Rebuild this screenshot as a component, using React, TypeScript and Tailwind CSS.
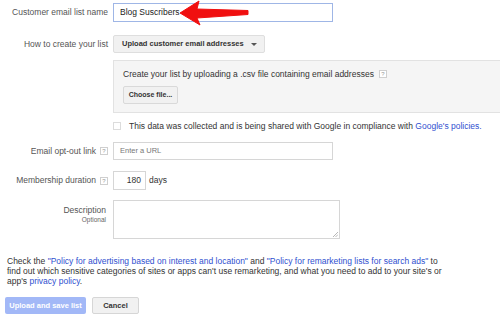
import React from 'react';

const font = { fontFamily: '"Liberation Sans", Arial, sans-serif' };

const Help = () => (
  <span className="inline-flex items-center justify-center w-[8px] h-[8px] border border-[#cfcfcf] text-[6px] leading-none text-[#999] bg-white">
    ?
  </span>
);

const Arrow = () => (
  <svg className="absolute left-[178px] top-0" width="74" height="26" viewBox="178 0 74 26">
    <polygon
      points="180,13 199,1 197,9 248,10.5 248,14.5 197,18 200,25"
      fill="#f01010"
      stroke="#f01010"
      strokeWidth="1"
      strokeLinejoin="round"
    />
  </svg>
);

export default function App() {
  return (
    <div
      className="relative w-[500px] h-[318px] overflow-hidden bg-white text-[8.5px] text-[#444] flex flex-col"
      style={font}
    >
      {/* list name */}
      <div className="flex items-center mt-[3px]">
        <div className="w-[108px] text-right text-[#555]">Customer email list name</div>
        <div className="ml-[5px] w-[220px] h-[19px] border border-[#9fb6e6] flex items-center px-[6px] text-[#222]">
          Blog Suscribers
        </div>
      </div>
      <Arrow />

      {/* how to create */}
      <div className="flex items-start mt-[13px]">
        <div className="w-[108px] text-right text-[#555] pt-[3px]">How to create your list</div>
        <div className="ml-[5px] w-[152px] h-[18px] bg-[#f1f1f1] border border-[#dedede] rounded-[2px] flex items-center justify-between pl-[8px] pr-[7px] text-[7.5px] font-bold text-[#333]">
          <span>Upload customer email addresses</span>
          <span className="w-0 h-0 border-l-[3px] border-r-[3px] border-t-[3px] border-l-transparent border-r-transparent border-t-[#555]" />
        </div>
      </div>

      {/* upload box */}
      <div className="ml-[113px] mt-[7px] w-[400px] h-[53px] bg-[#f5f5f5] border border-[#e2e2e2] pt-[8px] px-[9px] text-[#333]">
        <div className="flex items-center gap-[5px] h-[10px]">
          <span>Create your list by uploading a .csv file containing email addresses</span>
          <Help />
        </div>
        <div className="mt-[7px] w-[55px] h-[18px] bg-[#f1f1f1] border border-[#d9d9d9] rounded-[2px] flex items-center justify-center text-[7px] font-bold text-[#333]">
          Choose file...
        </div>
      </div>

      {/* consent */}
      <div className="flex items-center ml-[113px] mt-[9px] h-[8px]">
        <span className="w-[8px] h-[8px] border border-[#dcdcdc] bg-white" />
        <span className="ml-[8px] text-[#333]">
          This data was collected and is being shared with Google in compliance with{' '}
          <span className="text-[#2f50cf]">Google's policies.</span>
        </span>
      </div>

      {/* opt-out */}
      <div className="flex items-center mt-[12px]">
        <div className="w-[108px] flex items-center justify-end gap-[4px] text-[#555]">
          <span>Email opt-out link</span>
          <Help />
        </div>
        <div className="ml-[5px] w-[220px] h-[18px] border border-[#d6d6d6] flex items-center px-[6px] text-[7.5px] text-[#777]">
          Enter a URL
        </div>
      </div>

      {/* duration */}
      <div className="flex items-center mt-[11px]">
        <div className="w-[108px] flex items-center justify-end gap-[4px] text-[#555]">
          <span>Membership duration</span>
          <Help />
        </div>
        <div className="ml-[5px] w-[33px] h-[19px] border border-[#d6d6d6] flex items-center justify-end pr-[4px] text-[#333]">
          180
        </div>
        <span className="ml-[3px] text-[#333]">days</span>
      </div>

      {/* description */}
      <div className="flex items-start mt-[10px]">
        <div className="w-[108px] pr-[2px] text-right text-[#555] pt-[5px] leading-[10px]">
          <div>Description</div>
          <div className="text-[6.5px] text-[#666]">Optional</div>
        </div>
        <div className="relative ml-[5px] w-[227px] h-[39px] border border-[#d6d6d6]">
          <svg className="absolute right-[1px] bottom-[1px]" width="6" height="6" viewBox="0 0 6 6">
            <line x1="1" y1="6" x2="6" y2="1" stroke="#999" strokeWidth="0.7" />
            <line x1="3.5" y1="6" x2="6" y2="3.5" stroke="#999" strokeWidth="0.7" />
          </svg>
        </div>
      </div>

      {/* policy text */}
      <div className="mt-[17px] px-[7px] leading-[10px] text-[#333]">
        Check the <span className="text-[#2f50cf]">"Policy for advertising based on interest and location"</span> and{' '}
        <span className="text-[#2f50cf]">"Policy for remarketing lists for search ads"</span> to
        <br />
        find out which sensitive categories of sites or apps can't use remarketing, and what you need to add to your site's or
        <br />
        app's <span className="text-[#2f50cf]">privacy policy</span>.
      </div>

      {/* buttons */}
      <div className="flex mt-[11px] ml-[5px] gap-[6px]">
        <div className="w-[81px] h-[17px] rounded-[2px] bg-[#a2b8f7] flex items-center justify-center text-[7.5px] font-bold text-white">
          Upload and save list
        </div>
        <div className="w-[47px] h-[17px] rounded-[2px] bg-[#f1f1f1] border border-[#d6d6d6] flex items-center justify-center text-[7.5px] font-bold text-[#333]">
          Cancel
        </div>
      </div>
    </div>
  );
}
